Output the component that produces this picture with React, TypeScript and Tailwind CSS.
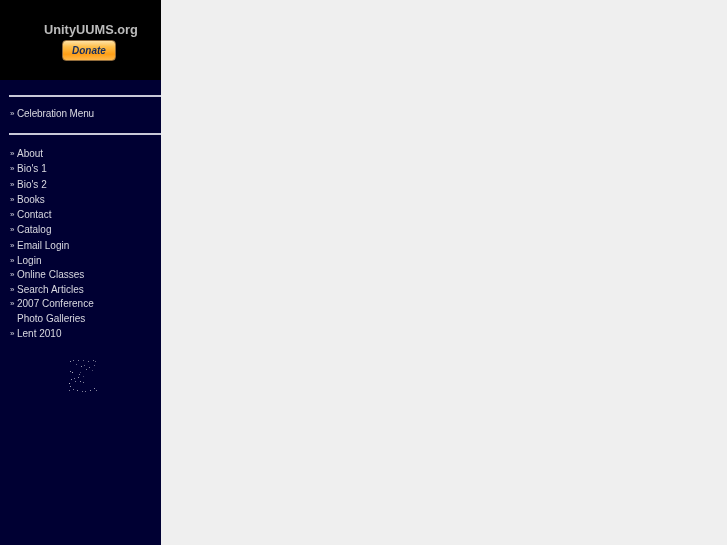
const menuRows = [
  { label: "About", h: "h-[15px]" },
  { label: "Bio's 1", h: "h-[16px]" },
  { label: "Bio's 2", h: "h-[15px]" },
  { label: "Books", h: "h-[16px]" },
  { label: "Contact", h: "h-[14px]" },
  { label: "Catalog", h: "h-[16px]" },
  { label: "Email Login", h: "h-[15px]" },
  { label: "Login", h: "h-[15px]" },
  { label: "Online Classes", h: "h-[14px]" },
  { label: "Search Articles", h: "h-[15px]" },
  { label: "2007 Conference", h: "h-[14px]" },
  { label: "Photo Galleries", h: "h-[15px]", noMark: true },
  { label: "Lent 2010", h: "h-[15px]" },
];

const dots: [number, number, number][] = [
  [70, 361, 0.6], [73, 360, 0.5], [78, 360, 0.5], [83, 360, 0.4], [88, 361, 0.5], [93, 360, 0.5], [95, 361, 0.4],
  [76, 364, 0.4], [81, 366, 0.6], [84, 365, 0.4], [89, 367, 0.5], [94, 365, 0.4],
  [70, 371, 0.6], [72, 372, 0.7], [79, 374, 0.5], [86, 369, 0.5], [92, 370, 0.3],
  [71, 379, 0.6], [74, 378, 0.5], [78, 377, 0.6], [83, 376, 0.3], [80, 372, 0.3],
  [69, 383, 0.7], [70, 386, 0.6], [75, 381, 0.5], [80, 381, 0.6], [83, 382, 0.5],
  [69, 390, 0.5], [73, 389, 0.5], [77, 390, 0.6], [82, 391, 0.5], [85, 391, 0.5], [90, 390, 0.6], [94, 388, 0.6], [96, 390, 0.5],
];

function Speckle() {
  return (
    <svg className="absolute left-0 top-0" width="161" height="545" viewBox="0 0 161 545">
      {dots.map(([x, y, o], i) => (
        <rect key={i} x={x} y={y} width="1" height="1" fill="#ffffff" opacity={o} />
      ))}
    </svg>
  );
}

function DonateButton() {
  return (
    <div className="mt-[2px] ml-[62px] flex h-[21px] w-[54px] items-center justify-center rounded-[4px] border border-[#8f6a3a] bg-[linear-gradient(#ffe2a6_0%,#ffc04d_30%,#ff9f17_70%,#ffb84a_100%)]">
      <span className="text-[10px] font-bold italic leading-none text-[#1a2f5c] [will-change:transform]">Donate</span>
    </div>
  );
}

export default function App() {
  return (
    <div className="flex h-[545px] w-[727px] overflow-hidden bg-[#efefef] font-['Liberation_Sans',Arial,sans-serif]">
      <aside className="relative flex w-[161px] shrink-0 flex-col bg-[#000033]">
        <div className="h-[80px] bg-black pt-[22px]">
          <div className="ml-[44px] text-[12.8px] font-bold leading-[16px] text-[#bcbcbc] [will-change:transform]">UnityUUMS.org</div>
          <DonateButton />
        </div>

        <div className="ml-[9px] mt-[15px] h-[2px] bg-[#c8c8d8]" />
        <div className="flex h-[34px] items-center pl-[10px] text-[10px] leading-none tracking-[-0.12px] text-[#d8d8e0] [will-change:transform]">
          <span className="mr-[2px] w-[5px] text-[8px]">»</span>
          Celebration Menu
        </div>
        <div className="ml-[9px] mt-[2px] h-[2px] bg-[#c8c8d8]" />

        <ul className="mt-[11px] pl-[10px] text-[10px] leading-none text-[#d8d8e0] [will-change:transform]">
          {menuRows.map((row) => (
            <li key={row.label} className={`flex items-center ${row.h}`}>
              <span className="mr-[2px] w-[5px] text-[8px]">{row.noMark ? "" : "»"}</span>
              {row.label}
            </li>
          ))}
        </ul>

        <Speckle />
      </aside>
      <main className="flex-1" />
    </div>
  );
}
